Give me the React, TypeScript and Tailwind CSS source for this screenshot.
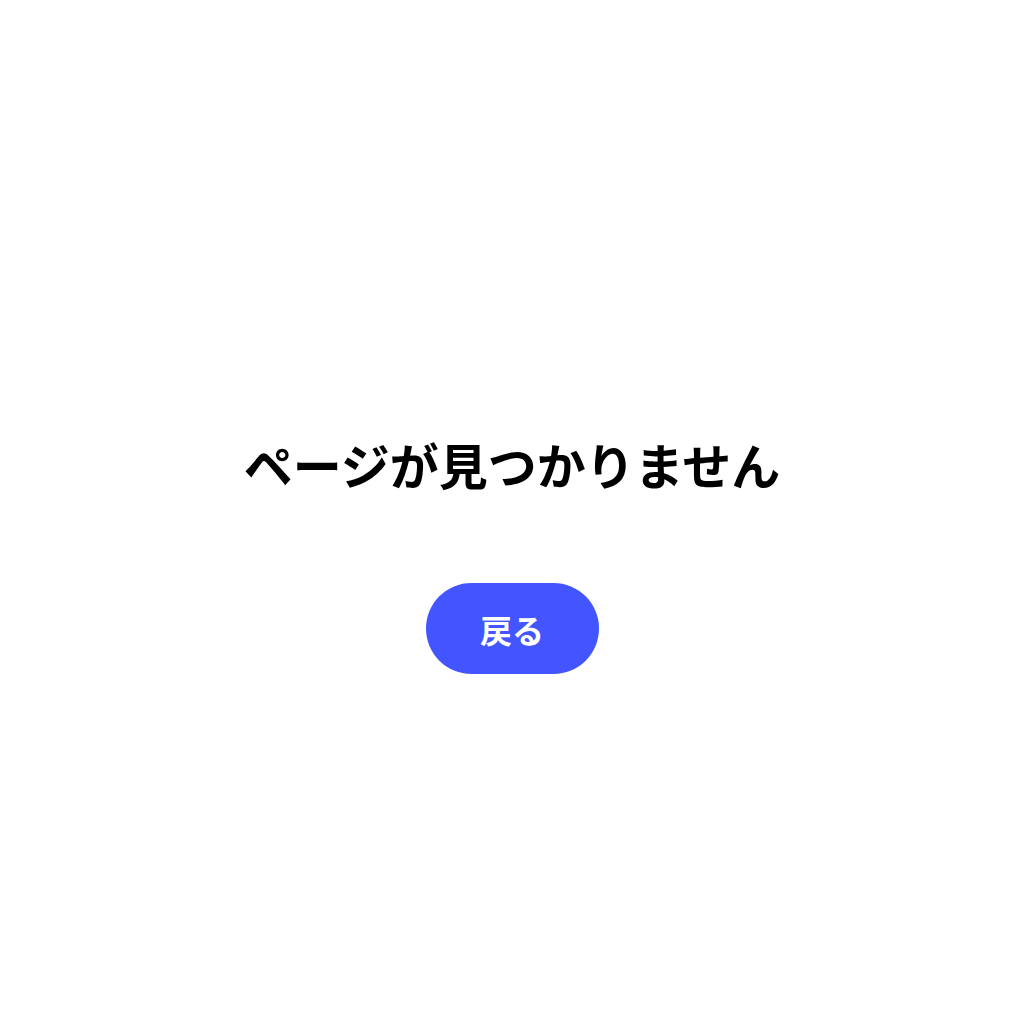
export default function App() {
  return (
    <div
      className="flex min-h-screen flex-col items-center justify-center bg-white pt-[78px]"
      style={{ fontFamily: '"Noto Sans CJK JP", "Noto Sans", sans-serif' }}
    >
      <h1 className="text-[49px] font-bold leading-[72px] text-black">ページが見つかりません</h1>
      <button className="mt-[83px] flex h-[91px] w-[173px] items-center justify-center rounded-full bg-[#4255ff] text-[32px] font-bold text-white">
        戻る
      </button>
    </div>
  )
}
